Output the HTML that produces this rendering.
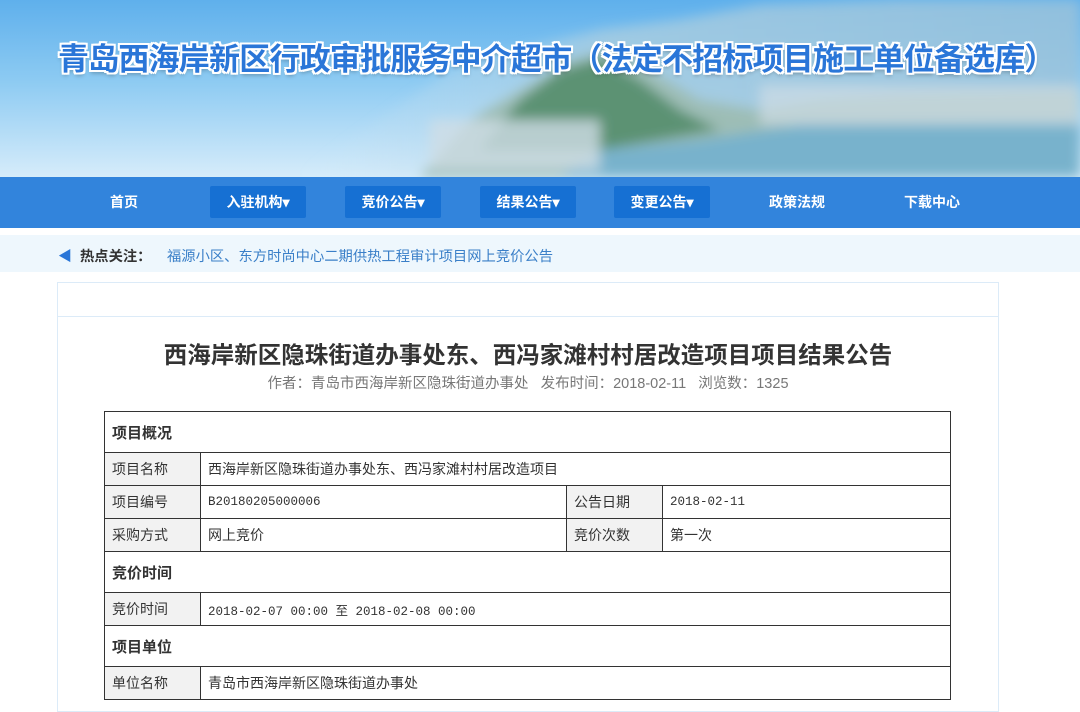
<!DOCTYPE html>
<html><head><meta charset="utf-8"><style>
*{margin:0;padding:0;box-sizing:border-box}
body{width:1080px;height:701px;overflow:hidden;background:#fff;font-family:"Liberation Sans","Noto Sans CJK SC",sans-serif;position:relative}
.banner{position:absolute;left:0;top:0;width:1080px;height:177px;background:linear-gradient(180deg,#5fb0ec 0%,#8ccaf2 45%,#d6ecfa 100%);overflow:hidden}
.hill{position:absolute}
.title{position:absolute;left:58px;top:34px;width:1010px;font-size:31px;font-weight:bold;color:#2a76d8;letter-spacing:-0.8px;white-space:nowrap;
text-shadow:2px 0 #fff,-2px 0 #fff,0 2px #fff,0 -2px #fff,2px 2px #fff,-2px -2px #fff,2px -2px #fff,-2px 2px #fff,0 3px 4px rgba(0,0,0,.3)}
.nav{position:absolute;left:0;top:177px;width:1080px;height:51px;background:#3284dc}
.nav a{position:absolute;top:9px;width:96px;height:32px;line-height:32px;text-align:center;color:#fff;font-size:14px;font-weight:bold;text-decoration:none}
.nav a.b{background:#1670d3;border-radius:2px}
.hot{position:absolute;left:0;top:235px;width:1080px;height:37px;background:#eef7fd;font-size:14.3px;line-height:44px}
.box{position:absolute;left:57px;top:282px;width:942px;height:430px;border:1px solid #dcebf8}
.box .hd{height:34px;border-bottom:1px solid #dcebf8}
h1{position:absolute;left:0;top:336px;width:1056px;text-align:center;font-size:23.5px;color:#333;font-weight:bold}
.meta{position:absolute;left:0;top:372px;width:1056px;text-align:center;font-size:14.5px;color:#777}
table{position:absolute;left:104px;top:411px;width:847px;border-collapse:collapse;font-size:14px;color:#333}
td{border:1px solid #333;padding:0 7px;height:33px}
td.l{background:#f2f2f2;width:96px}
td.v{font-family:"Liberation Mono","Noto Sans CJK SC",monospace;font-size:12.5px}
tr.h td{height:41px;font-weight:bold;font-size:15px}
</style></head><body>
<div class="banner">
<svg class="hill" width="1080" height="177" style="left:0;top:0">
<defs><linearGradient id="g1" x1="0" x2="1"><stop offset="0" stop-color="#cfe6f5" stop-opacity="0"/><stop offset=".4" stop-color="#a9cde0"/><stop offset="1" stop-color="#9cc3da"/></linearGradient>
<filter id="bl"><feGaussianBlur stdDeviation="6"/></filter></defs>
<g filter="url(#bl)">
<path d="M300 177 L380 120 L450 70 L520 50 L600 30 L680 20 L760 5 L900 0 L1080 0 L1080 177Z" fill="url(#g1)" opacity=".8"/>
<path d="M420 177 L470 120 L520 90 L570 60 L610 50 L650 70 L700 100 L760 110 L820 100 L900 95 L1080 90 L1080 177Z" fill="#9dbdb6"/>
<path d="M480 150 L520 100 L560 70 L600 58 L640 80 L680 110 L720 130 L600 150Z" fill="#5b9273"/>
<path d="M560 177 L600 150 L700 140 L800 125 L1080 120 L1080 177Z" fill="#78b2cc"/>
<rect x="430" y="120" width="170" height="50" fill="#cfdde6" opacity=".8"/>
<rect x="760" y="85" width="320" height="40" fill="#cfdde6" opacity=".7"/>
</g>
</svg>
<div class="title">青岛西海岸新区行政审批服务中介超市（法定不招标项目施工单位备选库）</div>
</div>
<div class="nav">
<a style="left:76px">首页</a>
<a class="b" style="left:210px">入驻机构▾</a>
<a class="b" style="left:345px">竞价公告▾</a>
<a class="b" style="left:480px">结果公告▾</a>
<a class="b" style="left:614px">变更公告▾</a>
<a style="left:749px">政策法规</a>
<a style="left:884px">下载中心</a>
</div>
<div class="hot"><span style="position:absolute;left:58px;top:-1px;color:#2a76d8;font-size:14px">◀</span><span style="position:absolute;left:80px;font-weight:bold;color:#333">热点关注：</span><span style="position:absolute;left:167px;color:#3a7fc8">福源小区、东方时尚中心二期供热工程审计项目网上竞价公告</span></div>
<div class="box"><div class="hd"></div></div>
<h1>西海岸新区隐珠街道办事处东、西冯家滩村村居改造项目项目结果公告</h1>
<div class="meta">作者：青岛市西海岸新区隐珠街道办事处&nbsp;&nbsp;&nbsp;发布时间：2018-02-11&nbsp;&nbsp;&nbsp;浏览数：1325</div>
<table>
<tr class="h"><td colspan="4">项目概况</td></tr>
<tr><td class="l">项目名称</td><td colspan="3">西海岸新区隐珠街道办事处东、西冯家滩村村居改造项目</td></tr>
<tr><td class="l">项目编号</td><td class="v" style="width:366px">B20180205000006</td><td class="l">公告日期</td><td class="v">2018-02-11</td></tr>
<tr><td class="l">采购方式</td><td>网上竞价</td><td class="l">竞价次数</td><td>第一次</td></tr>
<tr class="h"><td colspan="4">竞价时间</td></tr>
<tr><td class="l">竞价时间</td><td colspan="3" class="v">2018-02-07 00:00 至 2018-02-08 00:00</td></tr>
<tr class="h"><td colspan="4">项目单位</td></tr>
<tr><td class="l">单位名称</td><td colspan="3">青岛市西海岸新区隐珠街道办事处</td></tr>
</table>
</body></html>
